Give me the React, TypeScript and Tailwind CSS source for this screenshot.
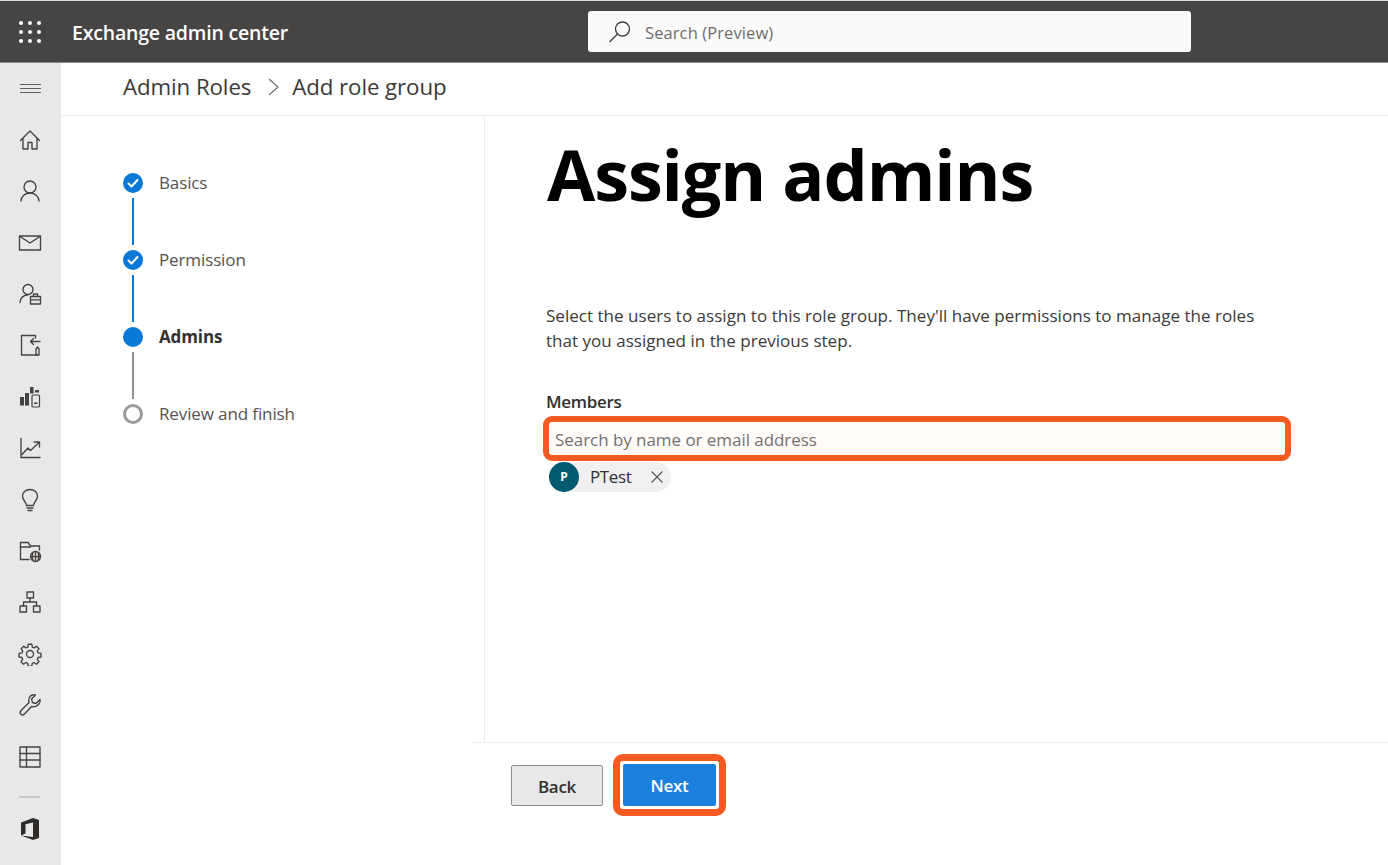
import React from "react";

function Ic({ children, size = 24 }: { children: React.ReactNode; size?: number }) {
  return (
    <svg width={size} height={size} viewBox="0 0 24 24" fill="none" stroke="#45423f" strokeWidth="1.350" strokeLinecap="round" strokeLinejoin="round">
      {children}
    </svg>
  );
}

const navIcons: React.ReactNode[] = [
  <Ic key="home"><path d="M2.500 12.500 12 3l9.500 9.500M5 10.500V21h5v-6.500h4V21h5V10.500" /></Ic>,
  <Ic key="user"><circle cx="12" cy="8" r="6" /><path d="M3 22c.3-4.800 4-8 9-8s8.700 3.200 9 8" /></Ic>,
  <Ic key="mail"><rect x="1.500" y="5" width="21" height="14" /><path d="M2 5.500l10 6.500 10-6.500" /></Ic>,
  <Ic key="admin"><circle cx="10" cy="7.500" r="5" /><path d="M2 20.500c.4-4.400 3-7.200 7.500-7.500" /><rect x="12.500" y="14.500" width="10" height="7.500" /><path d="M15.500 14.500v-2.500h4v2.500M12.500 17.800h10" /></Ic>,
  <Ic key="door"><path d="M17.500 5V2.500H3.500V22H19" /><path d="M22 8.500h-9.500M15.500 5.500l-3 3 3 3" /><path d="M18 22v-6l1.500-2 1.500 2v6z" /></Ic>,
  <svg key="rep" width="24" height="24" viewBox="0 0 24 24" fill="#45423f" stroke="none"><rect x="2" y="12" width="4" height="8.500" /><rect x="7" y="8" width="4" height="12.500" /><rect x="12" y="2" width="3.500" height="6.500" /><rect x="17" y="5" width="4" height="2.500" /><rect x="14" y="10" width="7.500" height="12" rx="1" fill="none" stroke="#45423f" strokeWidth="1.200" /><rect x="16" y="17.500" width="3.500" height="1.500" /></svg>,
  <Ic key="chart"><path d="M3 2.500V21.500h19" /><path d="M4 18.500l6-6.500 2.500 2.500 8.500-8M16 6h5.500v5" /></Ic>,
  <Ic key="bulb"><path d="M8.500 17.500c0-3.500-4-4.800-4-9.500C4.500 4 8 1.500 12 1.500S19.500 4 19.500 8c0 4.700-4 6-4 9.500z" /><path d="M9 20h6M10 22.500h4" /></Ic>,
  <Ic key="folder"><path d="M11 20.500H2.500V3.500H10l2.500 3.500h9V11" /><path d="M2.500 8h10" /><circle cx="17.500" cy="17.500" r="5" /><path d="M12.500 17.500h10M17.500 12.500v10M15 13.500c-1.200 2.500-1.200 5.500 0 8M20 13.500c1.200 2.500 1.200 5.500 0 8" /></Ic>,
  <Ic key="org"><rect x="9" y="2" width="6.500" height="6" /><rect x="2" y="16" width="6.500" height="6" /><rect x="15.500" y="16" width="6.500" height="6" /><path d="M12 8v4M5.500 16v-4h13v4" /></Ic>,
  <Ic key="gear"><circle cx="12" cy="12" r="3.500" /><path d="M10.200 2.200h3.600l.5 2.900 1.800.8 2.400-1.700 2.500 2.500-1.700 2.400.8 1.800 2.900.5v3.600l-2.900.5-.8 1.800 1.700 2.400-2.500 2.500-2.400-1.700-1.800.8-.5 2.900h-3.600l-.5-2.900-1.800-.8-2.400 1.700-2.500-2.500 1.700-2.400-.8-1.800-2.900-.5v-3.600l2.900-.5.8-1.800L3.200 6.700l2.500-2.500 2.400 1.700 1.800-.8z" /></Ic>,
  <Ic key="wrench"><path d="M22 6.500l-4 4-3.500-1-1-3.500 4-4c-3.500-1-7 1.500-6.800 5.500 0 .8.200 1.500.4 2L3 17.500c-2.500 3 1 6 3.500 3.500l7-7.500c.6.200 1.300.300 2 .3 4 0 7.500-3.500 6.500-7.300z" /></Ic>,
  <Ic key="table"><rect x="2" y="2" width="20" height="20" /><path d="M2 8.500h20M2 15h20M8.500 2v20" /></Ic>,
];

const steps = [
  { label: "Basics", state: "done" },
  { label: "Permission", state: "done" },
  { label: "Admins", state: "current" },
  { label: "Review and finish", state: "todo" },
];

function StepDot({ state }: { state: string }) {
  if (state === "todo") {
    return <div className="h-5 w-5 rounded-full border-[3px] border-[#999999] bg-white" />;
  }
  return (
    <div className="flex h-5 w-5 items-center justify-center rounded-full bg-[#0a78d7]">
      {state === "done" && (
        <svg width="12" height="12" viewBox="0 0 12 12" fill="none" stroke="#fff" strokeWidth="2" strokeLinecap="round" strokeLinejoin="round">
          <path d="M1.500 6.500l3 3 6-6.500" />
        </svg>
      )}
    </div>
  );
}

export default function App() {
  return (
    <div className="flex h-[865px] w-[1388px] flex-col overflow-hidden bg-white font-['Open_Sans',sans-serif] text-[#323130]">
      {/* Top bar */}
      <header className="flex h-[63px] shrink-0 items-center border-t border-b border-t-[#d8d8d8] border-b-[#8a8a8a] bg-[#474544]">
        <div className="grid w-[72px] shrink-0 justify-center">
          <div className="grid grid-cols-3 gap-x-[5px] gap-y-[5px] pr-[12px]">
            {Array.from({ length: 9 }).map((_, i) => (
              <span key={i} className="h-[4px] w-[4px] rounded-full bg-white" />
            ))}
          </div>
        </div>
        <div className="mt-[3px] w-[516px] shrink-0 text-[19.500px] font-semibold tracking-[-0.2px] text-white">Exchange admin center</div>
        <div className="flex h-[41px] w-[603px] items-center rounded-[3px] bg-[#fafafa] pl-[20px]">
          <svg width="24" height="24" viewBox="0 0 24 24" fill="none" stroke="#3c3c3c" strokeWidth="1.300" strokeLinecap="round">
            <circle cx="14.500" cy="9" r="7" />
            <path d="M9.500 14L2 21.500" />
          </svg>
          <span className="ml-[13px] mt-[3px] text-[16.500px] tracking-[0.1px] text-[#6f6d6b]">Search (Preview)</span>
        </div>
      </header>

      <div className="flex min-h-0 flex-1">
        {/* Left rail */}
        <aside className="flex w-[61px] shrink-0 flex-col items-center bg-[#e8e8e8] pr-[2px] pt-[13px]">
          <div className="flex h-[24px] items-center pl-[2px]">
            <div className="flex w-[21px] flex-col gap-[3px]">
              <span className="h-px bg-[#5f5f5f]" />
              <span className="h-px bg-[#5f5f5f]" />
              <span className="h-px bg-[#5f5f5f]" />
            </div>
          </div>
          <div className="mt-[14px] flex flex-col">
            {navIcons.map((ic, i) => (
              <div key={i} className="flex h-[51.420px] items-center justify-center">
                {ic}
              </div>
            ))}
          </div>
          <div className="mt-[14px] h-[2px] w-[21px] bg-[#c8c8c8]" />
          <svg className="mt-[19px]" width="22" height="24" viewBox="0 0 22 24">
            <path fill="#2f2c2a" d="M2 5.500 14 1l6 2v18l-6 2-12-4.500L14 20V5.500L6.500 7.200v9.300L2 18.500z" />
          </svg>
        </aside>

        <main className="flex min-w-0 flex-1 flex-col">
          {/* Breadcrumb */}
          <div className="flex h-[53px] shrink-0 items-center border-b border-[#ececec] pb-[5px] pl-[62px] text-[22.300px] tracking-[-0.1px] text-[#3b3a39]">
            <span>Admin Roles</span>
            <svg className="ml-[15px] mr-[12px]" width="14" height="20" viewBox="0 0 14 20" fill="none" stroke="#6b6b6b" strokeWidth="1.100">
              <path d="M3 2l9 8-9 8" />
            </svg>
            <span>Add role group</span>
          </div>

          {/* Wizard */}
          <div className="flex min-h-0 flex-1">
            <nav className="w-[424px] shrink-0 border-r border-[#ececec] pl-[62px] pt-[57px]">
              {steps.map((s, i) => (
                <div key={s.label}>
                  <div className="flex h-5 items-center">
                    <StepDot state={s.state} />
                    <span className={`ml-[16px] text-[17px] tracking-[-0.12px] ${s.state === "current" ? "font-bold text-[#323130]" : "text-[#555352]"}`}>{s.label}</span>
                  </div>
                  {i < 3 && (
                    <div className={`my-[5px] ml-[9px] h-[47px] w-[2px] ${i < 2 ? "bg-[#0a78d7]" : "bg-[#8f8f8f]"}`} />
                  )}
                </div>
              ))}
            </nav>
            <section className="min-w-0 flex-1 pl-[61px] pr-[110px]">
              <h1 className="ml-[1px] mt-[8px] text-[70px] font-bold leading-[100px] tracking-[-1.100px] text-black">Assign admins</h1>
              <p className="mt-[80px] text-[17px] leading-[24.500px] tracking-[0.03px] text-[#3b3a39]">
                Select the users to assign to this role group. They'll have permissions to manage the roles that you assigned in the previous step.
              </p>
              <div className="mt-[36px] text-[17px] font-semibold leading-[25px] tracking-[-0.3px] text-[#323130]">Members</div>
              <div className="-ml-[3px] mt-[2px] flex h-[45px] w-[748px] items-center rounded-[9px] border-[6px] border-[#f35b22] bg-[#fffcfa] pl-[6px] pt-[3px] text-[17px] tracking-[-0.05px] text-[#737170]">
                Search by name or email address
              </div>
              <div className="ml-[3px] mt-[1px] inline-flex h-[30px] items-center rounded-full bg-[#f0f0f0] pr-[7px]">
                <span className="flex h-[30px] w-[30px] items-center justify-center rounded-full bg-[#005b70] text-[12px] font-bold text-white">P</span>
                <span className="ml-[11px] text-[17px] tracking-[-0.4px] text-[#323130]">PTest</span>
                <svg className="ml-[19px]" width="14" height="14" viewBox="0 0 14 14" fill="none" stroke="#555" strokeWidth="1.100">
                  <path d="M1.500 1.500l11 11M12.500 1.500l-11 11" />
                </svg>
              </div>
            </section>
          </div>

          {/* Footer */}
          <div className="ml-[412px] flex h-[123px] shrink-0 items-start border-t border-[#ececec] pl-[38px] pt-[11px]">
            <button className="mt-[11px] h-[41px] w-[92px] rounded-[2px] border border-[#8f8f8f] bg-[#e8e8e8] pt-[2px] text-[17px] font-semibold tracking-[-0.3px] text-[#323130]">Back</button>
            <div className="ml-[10px] rounded-[10px] border-[7px] border-[#f35b22] bg-white p-[3px]">
              <button className="block h-[42px] w-[93px] rounded-[2px] bg-[#1b7fdc] pt-[2px] text-[17px] font-semibold tracking-[-0.3px] text-white">Next</button>
            </div>
          </div>
        </main>
      </div>
    </div>
  );
}
